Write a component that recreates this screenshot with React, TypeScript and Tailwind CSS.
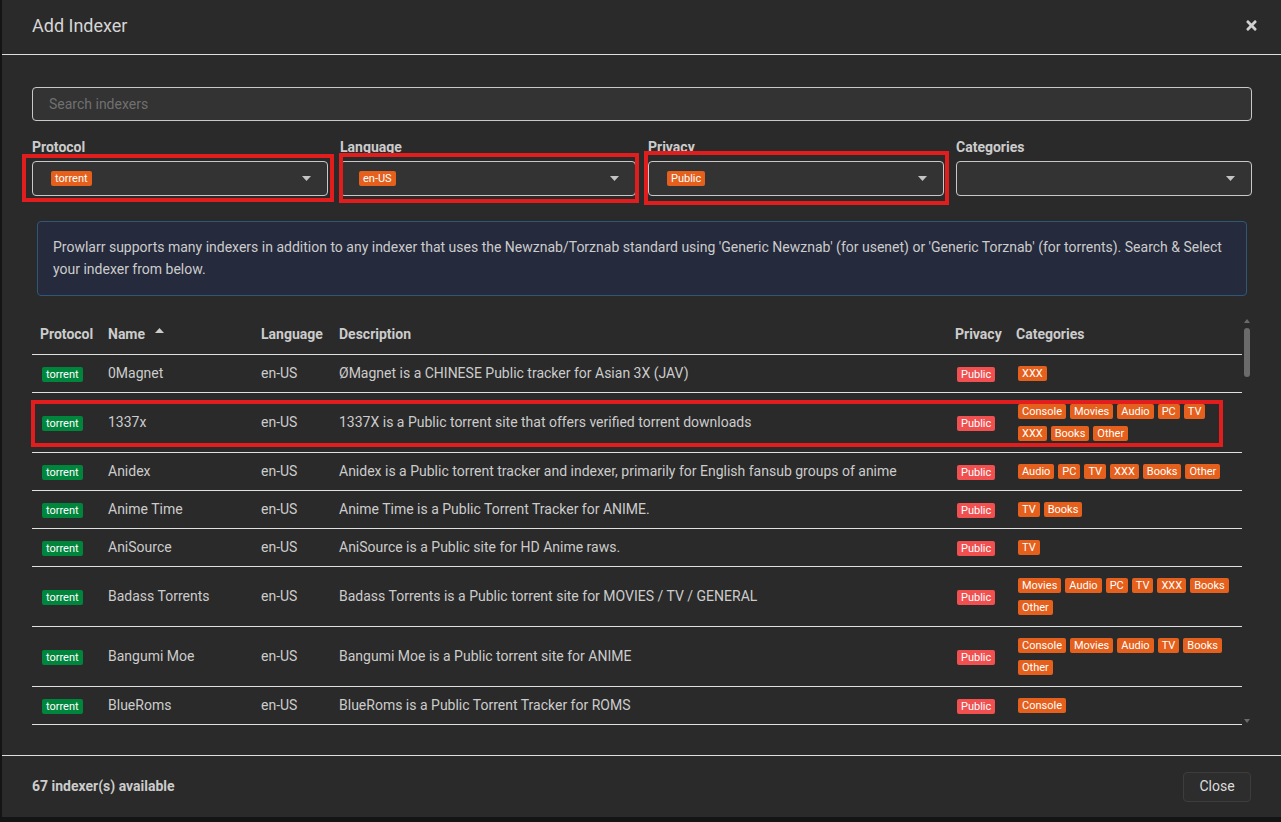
import React from "react";
import { FaTimes } from "react-icons/fa";

type Row = { name: string; desc: string; cats: string[] };

const rows: Row[] = [
  { name: "0Magnet", desc: "ØMagnet is a CHINESE Public tracker for Asian 3X (JAV)", cats: ["XXX"] },
  { name: "1337x", desc: "1337X is a Public torrent site that offers verified torrent downloads", cats: ["Console", "Movies", "Audio", "PC", "TV", "XXX", "Books", "Other"] },
  { name: "Anidex", desc: "Anidex is a Public torrent tracker and indexer, primarily for English fansub groups of anime", cats: ["Audio", "PC", "TV", "XXX", "Books", "Other"] },
  { name: "Anime Time", desc: "Anime Time is a Public Torrent Tracker for ANIME.", cats: ["TV", "Books"] },
  { name: "AniSource", desc: "AniSource is a Public site for HD Anime raws.", cats: ["TV"] },
  { name: "Badass Torrents", desc: "Badass Torrents is a Public torrent site for MOVIES / TV / GENERAL", cats: ["Movies", "Audio", "PC", "TV", "XXX", "Books", "Other"] },
  { name: "Bangumi Moe", desc: "Bangumi Moe is a Public torrent site for ANIME", cats: ["Console", "Movies", "Audio", "TV", "Books", "Other"] },
  { name: "BlueRoms", desc: "BlueRoms is a Public Torrent Tracker for ROMS", cats: ["Console"] },
];

function Badge({ children, color }: { children: React.ReactNode; color: string }) {
  return (
    <span className={`inline-block mx-[2px] px-[4px] rounded-[2px] text-[11px] leading-[15px] text-white whitespace-nowrap ${color}`}>
      {children}
    </span>
  );
}

function CaretDown() {
  return (
    <svg width="9" height="5" viewBox="0 0 9 5">
      <path d="M0 0H9L4.5 5Z" fill="#c4c4c4" />
    </svg>
  );
}

function Select({ label, tag }: { label: string; tag?: string }) {
  return (
    <div className="flex flex-col">
      <div className="h-[20px] leading-[20px] text-[14px] font-bold text-[#cccccc] mb-[4px]">{label}</div>
      <div className="h-[35px] border border-[#c8c8c8] rounded-[4px] bg-[#333333] flex items-center justify-between pl-[16px] pr-[16px]">
        <div className="flex items-center">{tag ? <Badge color="bg-[#e4601c]">{tag}</Badge> : null}</div>
        <CaretDown />
      </div>
    </div>
  );
}

const cols = "grid grid-cols-[68px_153px_78px_616px_61px_234px]";

export default function App() {
  return (
    <div className="relative w-[1281px] h-[822px] bg-[#141414] overflow-hidden" style={{ fontFamily: "Roboto, 'Liberation Sans', sans-serif" }}>
      <div className="ml-[2px] w-[1279px] h-[817px] bg-[#2a2a2a] flex flex-col text-[#cccccc]">
        {/* Header */}
        <div className="h-[55px] flex items-center justify-between border-b border-[#dedede] pl-[30px] pr-[22px] shrink-0">
          <div className="text-[18px] leading-[24px] text-[#d6d6d6] mb-[2px]">Add Indexer</div>
          <div className="mb-[3px] text-[#d0d0d0]">
            <FaTimes size={15} />
          </div>
        </div>

        {/* Body */}
        <div className="flex-1 min-h-0 flex flex-col pt-[32px] pb-[28px] pl-[30px] pr-[29px]">
          <div className="h-[34px] border border-[#c8c8c8] rounded-[4px] bg-[#333333] flex items-center pl-[16px] text-[14px] text-[#707070] shrink-0">
            Search indexers
          </div>

          <div className="grid grid-cols-4 gap-x-[12px] mt-[16px] shrink-0">
            <Select label="Protocol" tag="torrent" />
            <Select label="Language" tag="en-US" />
            <Select label="Privacy" tag="Public" />
            <Select label="Categories" />
          </div>

          <div className="mt-[25px] mx-[5px] h-[75px] shrink-0 rounded-[4px] border border-[#2f5878] bg-[#252a3c] px-[15px] py-[14px] text-[14px] leading-[22px] text-[#cccccc]">
            Prowlarr supports many indexers in addition to any indexer that uses the Newznab/Torznab standard using 'Generic Newznab' (for usenet) or 'Generic Torznab' (for torrents). Search &amp; Select your indexer from below.
          </div>

          <div className="mt-[19px] flex-1 min-h-0 flex">
            <div className="flex-1 min-w-0 overflow-hidden">
              <div className={`${cols} h-[40px] items-center border-b border-[#e0e0e0] text-[14px] font-bold text-[#cccccc]`}>
                <div className="px-[8px]">Protocol</div>
                <div className="px-[8px] flex items-center">
                  <span>Name</span>
                  <svg width="9" height="5" viewBox="0 0 9 5" className="ml-[10px] mb-[8px]">
                    <path d="M0 5H9L4.5 0Z" fill="#cccccc" />
                  </svg>
                </div>
                <div className="px-[8px]">Language</div>
                <div className="px-[8px]">Description</div>
                <div className="px-[8px]">Privacy</div>
                <div className="px-[8px]">Categories</div>
              </div>
              {rows.map((r) => (
                <div key={r.name} className={`${cols} items-center border-b border-[#e0e0e0] text-[14px] text-[#cccccc]`}>
                  <div className="px-[8px]">
                    <Badge color="bg-[#00853d]">torrent</Badge>
                  </div>
                  <div className="px-[8px] whitespace-nowrap">{r.name}</div>
                  <div className="px-[8px]">en-US</div>
                  <div className="px-[8px] whitespace-nowrap">{r.desc}</div>
                  <div className="px-[8px]">
                    <Badge color="bg-[#f05050]">Public</Badge>
                  </div>
                  <div className="px-[8px] py-[11px] flex flex-wrap gap-y-[7px]">
                    {r.cats.map((c) => (
                      <Badge key={c} color="bg-[#e4601c]">
                        {c}
                      </Badge>
                    ))}
                  </div>
                </div>
              ))}
            </div>
            <div className="w-[10px] flex flex-col items-center pt-[4px] pb-[4px]">
              <svg width="6" height="4" viewBox="0 0 6 4">
                <path d="M0 4H6L3 0Z" fill="#6b6b6b" />
              </svg>
              <div className="mt-[5px] w-[6px] h-[49px] rounded-full bg-[#6b6b6b]" />
              <div className="flex-1" />
              <svg width="6" height="4" viewBox="0 0 6 4">
                <path d="M0 0H6L3 4Z" fill="#6b6b6b" />
              </svg>
            </div>
          </div>
        </div>

        {/* Footer */}
        <div className="h-[62px] shrink-0 border-t border-[#dedede] flex items-center justify-between pl-[30px] pr-[30px]">
          <div className="text-[14px] font-bold text-[#cccccc]">67 indexer(s) available</div>
          <div className="w-[68px] h-[30px] rounded-[4px] border border-[#3d3d3d] bg-[#2d2d2d] flex items-center justify-center text-[14px] text-[#dddddd]">
            Close
          </div>
        </div>
      </div>

      {/* Red annotation boxes */}
      <div className="absolute left-[22px] top-[154px] w-[312px] h-[48px] border-4 border-[#e11d1d]" />
      <div className="absolute left-[339px] top-[153px] w-[300px] h-[50px] border-4 border-[#e11d1d]" />
      <div className="absolute left-[644px] top-[151px] w-[305px] h-[54px] border-4 border-[#e11d1d]" />
      <div className="absolute left-[31px] top-[400px] w-[1192px] h-[47px] border-4 border-[#e11d1d]" />
    </div>
  );
}
